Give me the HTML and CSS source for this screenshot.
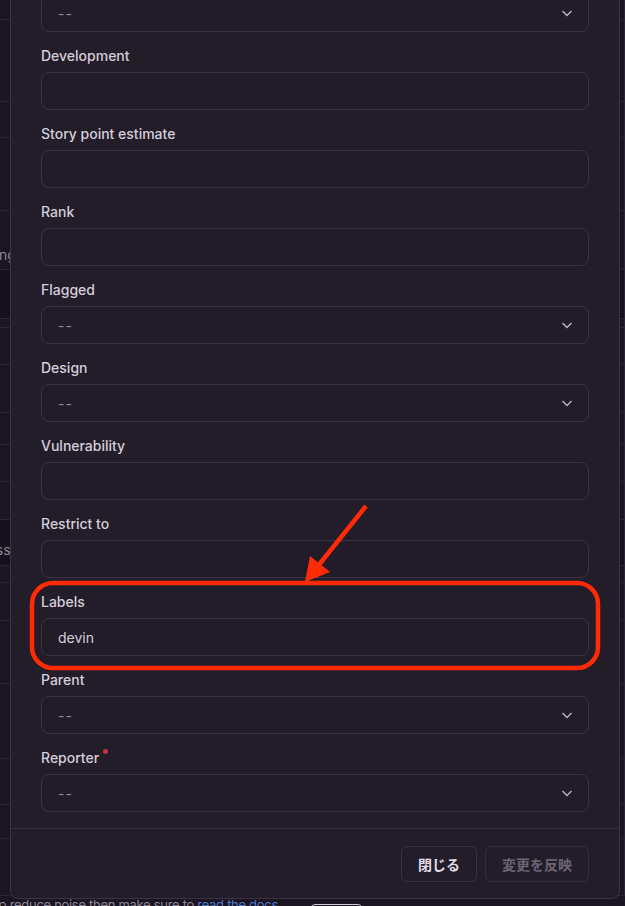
FILE: index.html
```html
<!DOCTYPE html>
<html lang="ja">
<head>
  <meta charset="UTF-8" />
  <meta name="viewport" content="width=device-width, initial-scale=1.0"/>
  <title>Edit issue fields</title>
  <link rel="stylesheet" href="styles.css">
</head>
<body>

  <!-- page behind the dialog -->
  <div class="page">
    <div class="rows">
      <div class="row r20"></div>
      <div class="row r82"></div>
      <div class="row r36"></div>
      <div class="row r73"></div>
      <div class="row r59"><span class="cell">Scanning</span></div>
      <div class="row r49 dark"></div>
      <div class="row r9"></div>
      <div class="row r37"></div>
      <div class="row r48"></div>
      <div class="row r32"></div>
      <div class="row r37"></div>
      <div class="row r38"></div>
      <div class="row r46 dark"><span class="cell">Access</span></div>
      <div class="row r17"></div>
      <div class="row r38"></div>
      <div class="row r63"></div>
      <div class="row r75"></div>
      <div class="row r46"></div>
      <div class="row r34"></div>
      <div class="row r57"></div>
    </div>
    <p class="hint">to reduce noise then make sure to <a href="#">read the docs</a>.<span class="ghost-btn"></span></p>
  </div>

  <div class="modal">
    <div class="modal-body">
      <div class="field">
        <label>Priority</label>
        <div class="select">
          <span class="placeholder">--</span>
          <svg class="chevron" viewBox="0 0 12 12"><path d="M1.5 4 L6 8.5 L10.5 4" /></svg>
        </div>
      </div>
      <div class="field">
        <label>Development</label>
        <div class="input"></div>
      </div>
      <div class="field">
        <label>Story point estimate</label>
        <div class="input"></div>
      </div>
      <div class="field">
        <label>Rank</label>
        <div class="input"></div>
      </div>
      <div class="field">
        <label>Flagged</label>
        <div class="select">
          <span class="placeholder">--</span>
          <svg class="chevron" viewBox="0 0 12 12"><path d="M1.5 4 L6 8.5 L10.5 4" /></svg>
        </div>
      </div>
      <div class="field">
        <label>Design</label>
        <div class="select">
          <span class="placeholder">--</span>
          <svg class="chevron" viewBox="0 0 12 12"><path d="M1.5 4 L6 8.5 L10.5 4" /></svg>
        </div>
      </div>
      <div class="field">
        <label>Vulnerability</label>
        <div class="input"></div>
      </div>
      <div class="field">
        <label>Restrict to</label>
        <div class="input"></div>
      </div>
      <div class="field">
        <label>Labels</label>
        <div class="input"><span class="value">devin</span></div>
      </div>
      <div class="field">
        <label>Parent</label>
        <div class="select">
          <span class="placeholder">--</span>
          <svg class="chevron" viewBox="0 0 12 12"><path d="M1.5 4 L6 8.5 L10.5 4" /></svg>
        </div>
      </div>
      <div class="field">
        <label>Reporter<span class="required"></span></label>
        <div class="select">
          <span class="placeholder">--</span>
          <svg class="chevron" viewBox="0 0 12 12"><path d="M1.5 4 L6 8.5 L10.5 4" /></svg>
        </div>
      </div>
    </div>
    <div class="modal-footer">
      <button class="btn">閉じる</button>
      <button class="btn" disabled>変更を反映</button>
    </div>
  </div>

  <!-- red callout drawn on top of the screenshot -->
  <svg class="callout" viewBox="0 0 625 906">
    <rect x="32" y="583" width="566" height="85" rx="21" />
    <line x1="366" y1="506" x2="318" y2="566" />
    <polygon points="305,582 310,556 330,572" />
  </svg>

</body>
</html>
```

FILE: styles.css
```css
:root {
  --page-bg: #1a1521;
  --row-line: #2a2333;
  --modal-bg: #231d2a;
  --modal-border: #3a3345;
  --field-bg: #221c29;
  --field-border: #3a3344;
  --label: #d3cdd9;
  --muted: #8e8798;
  --callout: #ff2a06;
}
* {
  box-sizing: border-box;
}
body {
  margin: 0;
  height: 906px;
  overflow: hidden;
  background: var(--page-bg);
  font-family: Inter, 'Noto Sans CJK JP', sans-serif;
  font-size: 14px;
  color: var(--label);
  position: relative;
}

/* background page */
.page {
  display: flex;
  flex-direction: column;
}
.rows {
  display: flex;
  flex-direction: column;
  border-right: 1px solid var(--row-line);
}
.row {
  border-bottom: 1px solid var(--row-line);
  display: flex;
  align-items: flex-end;
  overflow: hidden;
}
.row.dark {
  background: #15101b;
  align-items: center;
}
.r9 { height: 9px; }
.r17 { height: 17px; }
.r20 { height: 20px; }
.r32 { height: 32px; }
.r34 { height: 34px; }
.r36 { height: 36px; }
.r37 { height: 37px; }
.r38 { height: 38px; }
.r46 { height: 46px; }
.r48 { height: 48px; }
.r49 { height: 49px; }
.r57 { height: 57px; }
.r59 { height: 59px; }
.r63 { height: 63px; }
.r73 { height: 73px; }
.r75 { height: 75px; }
.r82 { height: 82px; }
.cell {
  color: var(--muted);
  white-space: nowrap;
  margin-left: -46px;
  padding-bottom: 6px;
}
.row.dark .cell {
  margin-left: -38px;
  padding: 14px 0 0;
}
.hint {
  margin: -1px 0 0 -5px;
  color: var(--muted);
  white-space: nowrap;
  font-size: 13px;
  line-height: 20px;
  letter-spacing: -0.3px;
}
.hint a {
  color: #5377c9;
  text-decoration: none;
}
.ghost-btn {
  display: inline-block;
  width: 51px;
  height: 20px;
  margin-left: 30px;
  border: 1px solid #cfcad6;
  border-radius: 4px;
  vertical-align: top;
  margin-top: 9px;
}

/* dialog */
.modal {
  position: absolute;
  left: 10px;
  top: -55px;
  width: 610px;
  background: var(--modal-bg);
  border: 1px solid var(--modal-border);
  border-radius: 8px;
}
.modal-body {
  display: flex;
  flex-direction: column;
  gap: 14px;
  padding: 22px 30px 16px;
}
.field {
  display: flex;
  flex-direction: column;
  gap: 6px;
}
.field label {
  font-weight: 500;
  line-height: 20px;
  color: var(--label);
}
.required {
  display: inline-block;
  width: 5px;
  height: 5px;
  border-radius: 50%;
  background: #c8303c;
  margin-left: 4px;
  vertical-align: 9px;
}
.input,
.select {
  height: 38px;
  border: 1px solid var(--field-border);
  border-radius: 8px;
  background: var(--field-bg);
  padding: 0 16px;
  display: flex;
  align-items: center;
  justify-content: space-between;
}
.placeholder {
  color: var(--muted);
  letter-spacing: 1px;
}
.value {
  color: #d2ccd9;
}
.chevron {
  width: 12px;
  height: 12px;
  margin-right: -1px;
  fill: none;
  stroke: #b9b2c2;
  stroke-width: 1.4;
}
.modal-footer {
  border-top: 1px solid #332c3d;
  display: flex;
  justify-content: flex-end;
  gap: 8px;
  padding: 17px 30px 16px;
}
.btn {
  height: 36px;
  padding: 0 16px;
  border: 1px solid var(--modal-border);
  border-radius: 6px;
  background: transparent;
  color: #e2dde7;
  font-family: Inter, 'Noto Sans CJK JP', sans-serif;
  font-size: 14px;
  font-weight: 700;
  cursor: pointer;
}
.btn:disabled {
  color: #6c6474;
  font-weight: 600;
  border-color: #342d3e;
  cursor: default;
}

/* annotation */
.callout {
  position: absolute;
  left: 0;
  top: 0;
  width: 625px;
  height: 906px;
  pointer-events: none;
}
.callout rect {
  fill: none;
  stroke: var(--callout);
  stroke-width: 4.5;
}
.callout line {
  stroke: var(--callout);
  stroke-width: 4.5;
}
.callout polygon {
  fill: var(--callout);
}
```
